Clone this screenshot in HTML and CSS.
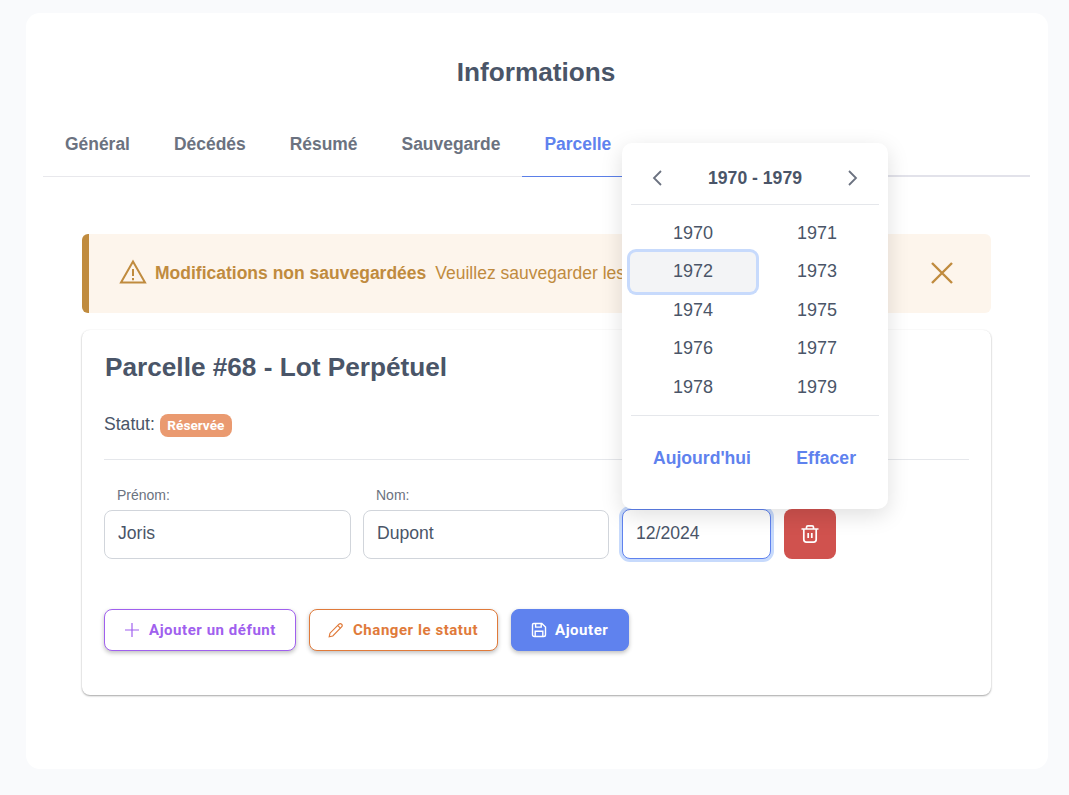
FILE: index.html
```html
<!DOCTYPE html>
<html lang="fr">
<head>
    <meta charset="utf-8">
    <meta name="viewport" content="width=device-width, initial-scale=1.0">
    <title>Informations</title>
    <link rel="stylesheet" href="styles.css">
</head>
<body>
<div class="page">
    <h1 class="page-title">Informations</h1>

    <div class="tabs">
        <a class="tab">Général</a>
        <a class="tab">Décédés</a>
        <a class="tab">Résumé</a>
        <a class="tab">Sauvegarde</a>
        <a class="tab active">Parcelle</a>
    </div>

    <div class="content">
        <div class="alert">
            <svg class="alert-icon" viewBox="0 0 28 26" fill="none" stroke="currentColor" stroke-width="2">
                <path d="M14 2.5 2 23.5h24z" stroke-linejoin="miter"/>
                <path d="M14 10v7M14 19v2.2"/>
            </svg>
            <strong class="alert-title">Modifications non sauvegardées</strong>
            <span class="alert-text">Veuillez sauvegarder les</span>
            <svg class="alert-close" viewBox="0 0 24 24" fill="none" stroke="currentColor" stroke-width="2.4">
                <path d="M2 2l20 20M22 2 2 22"/>
            </svg>
        </div>

        <div class="plot-card">
            <h2 class="plot-title">Parcelle #68 - Lot Perpétuel</h2>
            <div class="plot-status">
                <span>Statut:</span>
                <span class="badge">Réservée</span>
            </div>
            <hr class="divider">

            <div class="owner-row">
                <div class="field">
                    <label class="field-label">Prénom:</label>
                    <input class="input" type="text" value="Joris">
                </div>
                <div class="field field-name">
                    <label class="field-label">Nom:</label>
                    <input class="input" type="text" value="Dupont">
                </div>
                <div class="field field-date">
                    <input class="input input-focus" type="text" value="12/2024">
                </div>
                <button class="btn-delete">
                    <svg viewBox="0 0 20 20" width="20" height="20" fill="none" stroke="currentColor" stroke-width="1.7">
                        <path d="M1.5 5h17M6.5 5V3.2q0-1.4 1.4-1.4h4.2q1.4 0 1.4 1.4V5M3.8 5v10.6q0 2.6 2.6 2.6h7.2q2.6 0 2.6-2.6V5M8.2 9v5M11.8 9v5"/>
                    </svg>
                </button>
            </div>

            <div class="actions">
                <button class="btn btn-purple">
                    <svg viewBox="0 0 16 16" width="16" height="16" fill="none" stroke="currentColor" stroke-width="1.2"><path d="M8 1v14M1 8h14"/></svg>
                    Ajouter un défunt
                </button>
                <button class="btn btn-orange">
                    <svg viewBox="0 0 16 16" width="16" height="16" fill="none" stroke="currentColor" stroke-width="1.2"><path d="M1.2 14.8l.8-3.6L11 2.2q1.3-1.2 2.6 0t0 2.6L4.8 14z"/><path d="M9.8 3.6l2.6 2.6"/></svg>
                    Changer le statut
                </button>
                <button class="btn btn-blue">
                    <svg viewBox="0 0 16 16" width="16" height="16" fill="none" stroke="currentColor" stroke-width="1.4"><path d="M2.8 1.5h8l3.7 3.5v7.7q0 1.8-1.8 1.8H3.3q-1.8 0-1.8-1.8V2.8q0-1.3 1.3-1.3z"/><path d="M4.6 1.5v3.6h5.6V1.5M4.2 14.5V9.2h7.6v5.3"/></svg>
                    Ajouter
                </button>
            </div>
        </div>
    </div>

    <div class="picker">
        <div class="picker-head">
            <svg class="picker-arrow" viewBox="0 0 12 18" fill="none" stroke="currentColor" stroke-width="1.8"><path d="M10 2 3 9l7 7"/></svg>
            <span class="picker-range">1970 - 1979</span>
            <svg class="picker-arrow" viewBox="0 0 12 18" fill="none" stroke="currentColor" stroke-width="1.8"><path d="M2 2l7 7-7 7"/></svg>
        </div>
        <div class="picker-years">
            <span class="year">1970</span>
            <span class="year">1971</span>
            <span class="year year-selected">1972</span>
            <span class="year">1973</span>
            <span class="year">1974</span>
            <span class="year">1975</span>
            <span class="year">1976</span>
            <span class="year">1977</span>
            <span class="year">1978</span>
            <span class="year">1979</span>
        </div>
        <div class="picker-foot">
            <a class="picker-link">Aujourd'hui</a>
            <a class="picker-link">Effacer</a>
        </div>
    </div>
</div>
</body>
</html>
```

FILE: styles.css
```css
body {
    margin: 0;
    background: #f9fafc;
    font-family: "Liberation Sans", Arial, sans-serif;
    color: #4a5568;
}

.page {
    position: relative;
    width: 1022px;
    height: 756px;
    margin: 13px 0 26px 26px;
    background: #fff;
    border-radius: 14px;
    overflow: hidden;
}

.page-title {
    margin: 0;
    padding: 43px 2px 0 0;
    font-size: 26.2px;
    line-height: 32px;
    font-weight: 700;
    text-align: center;
}

.tabs {
    display: flex;
    margin: 26px 18px 0 17px;
}

/* the line is a bit heavier right of the active tab */
.tabs::after {
    content: "";
    flex: 1;
    border-bottom: 2px solid #e2e2ea;
}

.tab {
    padding: 0 22px;
    height: 63px;
    line-height: 60px;
    font-size: 17.45px;
    font-weight: 700;
    color: #6b7280;
    box-sizing: border-box;
    border-bottom: 1px solid #e8e8ec;
}

.tab.active {
    color: #5f82ee;
    border-bottom-color: #5b7fe8;
}

.content {
    padding: 57px 57px 0 56px;
}

.alert {
    display: flex;
    align-items: center;
    height: 79px;
    padding: 0 37px 0 30px;
    box-sizing: border-box;
    background: #fdf5ec;
    border-left: 7px solid #c08b3e;
    border-radius: 6px;
    color: #c08b3e;
    font-size: 17.5px;
}

.alert-icon {
    width: 28px;
    height: 26px;
    margin-right: 8px;
    margin-top: -4px;
}

.alert-title {
    margin-right: 9px;
}

.alert-text {
    flex: 1;
}

.alert-close {
    width: 24px;
    height: 24px;
    margin-top: -2px;
}

.plot-card {
    margin-top: 17px;
    padding: 22px 22px 44px;
    height: 365px;
    box-sizing: border-box;
    background: #fff;
    border-radius: 8px;
    box-shadow: 0 1px 2px rgba(0, 0, 0, .35), 0 0 2px rgba(0, 0, 0, .04);
}

.plot-title {
    margin: 0 0 0 1px;
    font-size: 26.2px;
    line-height: 30px;
    font-weight: 700;
}

.plot-status {
    display: flex;
    align-items: center;
    gap: 5px;
    margin-top: 30px;
    font-size: 17.6px;
    height: 24px;
}

.badge {
    margin-top: 2px;
    padding: 0 7.5px;
    height: 23px;
    line-height: 23px;
    background: #ea9a70;
    border-radius: 8px;
    color: #fff;
    font-family: Roboto, sans-serif;
    font-size: 13.6px;
    font-weight: 700;
}

.divider {
    margin: 23px 0 0;
    border: 0;
    border-top: 1px solid #e5e7eb;
}

.owner-row {
    display: flex;
    align-items: flex-end;
    gap: 12px;
    margin-top: 27px;
}

.field {
    width: 247px;
}

.field-name {
    width: 246px;
}

.field-date {
    width: 149px;
    margin: 0 1px;
}

.field-label {
    display: block;
    padding-left: 13px;
    margin-bottom: 7px;
    font-size: 14px;
    line-height: 16px;
    color: #6b7280;
}

.input {
    display: block;
    width: 100%;
    height: 49px;
    padding: 0 13px 2px;
    box-sizing: border-box;
    border: 1px solid #d1d5db;
    border-radius: 8px;
    background: #fff;
    font-family: inherit;
    font-size: 17.6px;
    color: #4a5568;
    outline: none;
}

.input-focus {
    height: 50px;
    border-color: #5f82ee;
    box-shadow: 0 0 0 3px #c7dafc;
}

.btn-delete {
    display: flex;
    align-items: center;
    justify-content: center;
    width: 52px;
    height: 50px;
    padding: 0;
    border: 0;
    border-radius: 8px;
    background: #d0524e;
    color: #fff;
}

.actions {
    display: flex;
    gap: 13px;
    margin-top: 50px;
}

.btn {
    display: flex;
    align-items: center;
    gap: 9px;
    height: 42px;
    padding: 0 19px;
    box-sizing: border-box;
    background: #fff;
    border: 1px solid;
    border-radius: 8px;
    font-family: Roboto, sans-serif;
    font-size: 15px;
    font-weight: 700;
    letter-spacing: .55px;
    white-space: nowrap;
    box-shadow: 0 2px 4px rgba(0, 0, 0, .25);
}

.btn-purple {
    width: 192px;
    color: #a060ee;
    border-color: #a060ee;
}

.btn-orange {
    width: 189px;
    padding: 0 18px;
    color: #e07a3a;
    border-color: #e07a3a;
}

.btn-blue {
    width: 118px;
    gap: 8px;
    color: #fff;
    background: #5f82ee;
    border-color: #5f82ee;
}

.picker {
    position: absolute;
    left: 596px;
    top: 130px;
    width: 266px;
    height: 366px;
    padding: 0 9px;
    box-sizing: border-box;
    background: #fff;
    border-radius: 10px;
    box-shadow: 0 6px 22px rgba(0, 0, 0, .13);
}

.picker-head {
    display: flex;
    align-items: center;
    justify-content: space-between;
    height: 62px;
    padding: 9px 20px 0 20px;
    box-sizing: border-box;
    border-bottom: 1px solid #e5e7eb;
}

.picker-arrow {
    width: 12px;
    height: 18px;
    color: #6b7280;
}

.picker-range {
    font-size: 17.6px;
    font-weight: 700;
}

.picker-years {
    display: grid;
    grid-template-columns: 124px 124px;
    grid-auto-rows: 38.4px;
    padding: 10px 0 8px;
    border-bottom: 1px solid #e5e7eb;
    text-align: center;
    font-size: 18px;
}

.year {
    line-height: 37px;
}

.year-selected {
    width: 126px;
    height: 40px;
    margin: -1.4px 0 0 -1px;
    line-height: 38px;
    background: #f3f4f6;
    border-radius: 6px;
    box-shadow: 0 0 0 3px #c7dafc;
}

.picker-foot {
    display: flex;
    justify-content: space-between;
    padding: 31px 23px 0 22px;
}

.picker-link {
    font-size: 17.6px;
    line-height: 22px;
    font-weight: 700;
    color: #5f82ee;
}
```
